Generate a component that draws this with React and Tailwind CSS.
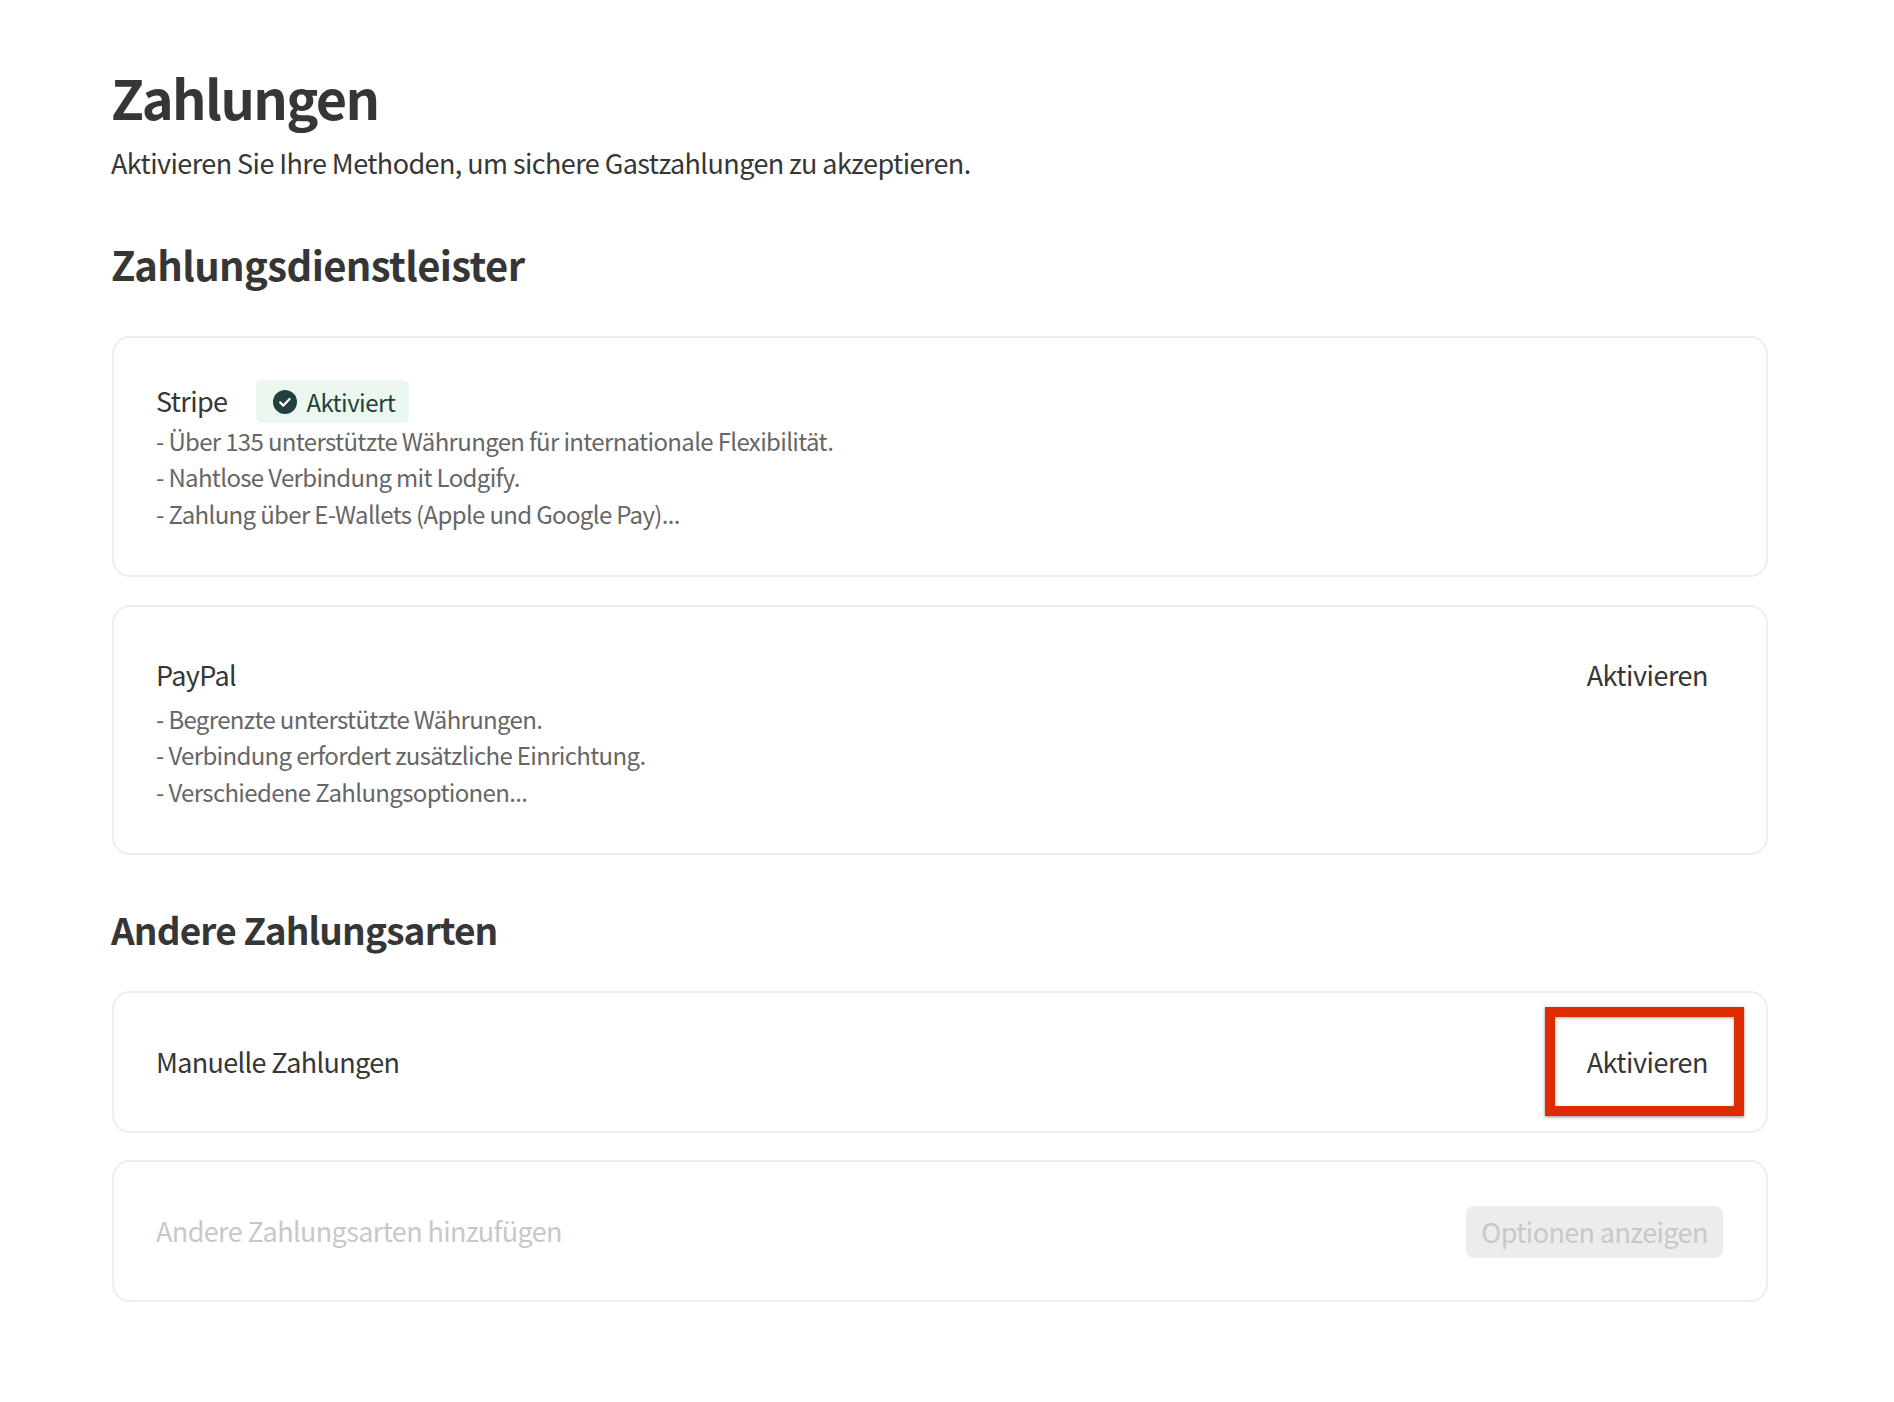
const font = { fontFamily: '"Noto Sans CJK JP", "Noto Sans", sans-serif' };

function Check() {
  return (
    <svg width="24" height="24" viewBox="0 0 24 24" className="shrink-0">
      <circle cx="12" cy="12" r="12" fill="#21403f" />
      <path d="M7.2 12.4l3.2 3.2 6.2-6.6" fill="none" stroke="#ffffff" strokeWidth="2.2" strokeLinecap="round" strokeLinejoin="round" />
    </svg>
  );
}

function Desc({ lines }) {
  return (
    <div className="text-[24px] leading-[36.4px] tracking-[-0.66px] text-[#666666]">
      {lines.map((l) => (
        <div key={l}>{l}</div>
      ))}
    </div>
  );
}

function Card({ className, children }) {
  return <div className={"border-2 border-[#eeeeee] rounded-[18px] pl-[42px] bg-white " + className}>{children}</div>;
}

export default function App() {
  return (
    <div className="w-[1894px] h-[1402px] bg-white pl-[112px] pr-[126px] pt-[62px] text-[#363636]" style={font}>
      <h1 className="-ml-[1px] text-[54px] leading-[70px] tracking-[-1.6px] font-bold">Zahlungen</h1>
      <p className="-ml-[1px] mt-[13px] text-[27px] leading-[36px] tracking-[-0.58px]">Aktivieren Sie Ihre Methoden, um sichere Gastzahlungen zu akzeptieren.</p>
      <h2 className="-ml-[1px] mt-[55px] text-[40px] leading-[56px] tracking-[-0.63px] font-bold">Zahlungsdienstleister</h2>

      <Card className="mt-[44px] h-[241px] pt-[42px]">
        <div className="flex items-center h-[43px]">
          <span className="text-[27px] tracking-[-0.62px]">Stripe</span>
          <span className="ml-[29px] flex items-center gap-[9px] h-[43px] w-[153px] pl-[17px] rounded-[6px] bg-[#ebf7ef] text-[24px] tracking-[-0.55px] text-[#21403f]">
            <Check />
            Aktiviert
          </span>
        </div>
        <Desc lines={["- Über 135 unterstützte Währungen für internationale Flexibilität.", "- Nahtlose Verbindung mit Lodgify.", "- Zahlung über E-Wallets (Apple und Google Pay)..."]} />
      </Card>

      <Card className="mt-[28px] h-[250px] pt-[48px] pr-[58px]">
        <div className="flex items-center justify-between h-[40px] text-[27px] tracking-[-0.5px]">
          <span className="tracking-[-0.62px]">PayPal</span>
          <span>Aktivieren</span>
        </div>
        <div className="mt-[6px]">
          <Desc lines={["- Begrenzte unterstützte Währungen.", "- Verbindung erfordert zusätzliche Einrichtung.", "- Verschiedene Zahlungsoptionen..."]} />
        </div>
      </Card>

      <h2 className="-ml-[1px] mt-[47px] text-[37px] leading-[54px] tracking-[-0.85px] font-bold">Andere Zahlungsarten</h2>

      <Card className="mt-[35px] h-[142px] pr-[58px] flex items-center justify-between text-[27px] tracking-[-0.5px]">
        <span className="tracking-[-0.68px]">Manuelle Zahlungen</span>
        <span className="relative">
          Aktivieren
          <span className="absolute left-[-42px] top-[-35px] w-[199px] h-[109px] border-[10px] border-[#dd2c00] shadow-[0_1px_3px_rgba(0,0,0,0.45),inset_0_1px_3px_rgba(0,0,0,0.35)]" />
        </span>
      </Card>

      <Card className="mt-[27px] h-[142px] pr-[43px] flex items-center justify-between text-[27px] tracking-[-0.62px] text-[#c8c8c8]">
        <span>Andere Zahlungsarten hinzufügen</span>
        <span className="mt-[2px] flex items-center justify-center w-[257px] h-[52px] rounded-[8px] bg-[#ececec]">Optionen anzeigen</span>
      </Card>
    </div>
  );
}
